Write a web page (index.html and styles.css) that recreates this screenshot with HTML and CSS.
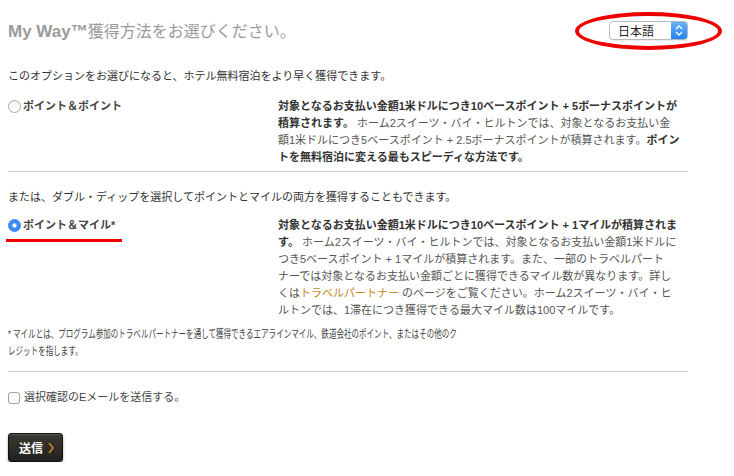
FILE: index.html
```html
<!DOCTYPE html>
<html lang="ja">
<head>
    <meta charset="UTF-8">
    <title>My Way 獲得方法</title>
    <link rel="stylesheet" href="styles.css">
</head>
<body>
    <div class="page">
        <div class="header">
            <h1 class="title"><span class="brand">My Way™</span><span class="title-ja">獲得方法をお選びください。</span></h1>
            <div class="lang-select">
                <span class="lang-value">日本語</span>
                <span class="lang-arrows">
                    <svg width="16" height="19" viewBox="0 0 16 19">
                        <path d="M5 8 L8 5 L11 8" fill="none" stroke="#fff" stroke-width="1.4"/>
                        <path d="M5 11 L8 14 L11 11" fill="none" stroke="#fff" stroke-width="1.4"/>
                    </svg>
                </span>
            </div>
        </div>
        <div class="highlight-ring"></div>

        <p class="intro">このオプションをお選びになると、ホテル無料宿泊をより早く獲得できます。</p>
        <div class="option">
            <div class="option-left">
                <label class="option-label"><span class="radio"></span>ポイント＆ポイント</label>
            </div>
            <p class="option-desc"><b>対象となるお支払い金額1米ドルにつき10ベースポイント + 5ボーナスポイントが積算されます。</b> ホーム2スイーツ・バイ・ヒルトンでは、対象となるお支払い金額1米ドルにつき5ベースポイント + 2.5ボーナスポイントが積算されます。<b>ポイントを無料宿泊に変える最もスピーディな方法です。</b></p>
        </div>

        <hr class="divider">

        <p class="intro intro-second">または、ダブル・ディップを選択してポイントとマイルの両方を獲得することもできます。</p>
        <div class="option option-second">
            <div class="option-left">
                <label class="option-label"><span class="radio radio-on"></span>ポイント＆マイル*</label>
                <div class="mark-line"></div>
            </div>
            <p class="option-desc"><b>対象となるお支払い金額1米ドルにつき10ベースポイント + 1マイルが積算されます。</b> ホーム2スイーツ・バイ・ヒルトンでは、対象となるお支払い金額1米ドルにつき5ベースポイント + 1マイルが積算されます。また、一部のトラベルパートナーでは対象となるお支払い金額ごとに獲得できるマイル数が異なります。詳しくは<a href="#" class="partner-link">トラベルパートナー</a> のページをご覧ください。ホーム2スイーツ・バイ・ヒルトンでは、1滞在につき獲得できる最大マイル数は100マイルです。</p>
        </div>

        <p class="footnote">* マイルとは、プログラム参加のトラベルパートナーを通して獲得できるエアラインマイル、鉄道会社のポイント、またはその他のクレジットを指します。</p>

        <hr class="divider divider-low">

        <label class="confirm"><span class="checkbox"></span>選択確認のEメールを送信する。</label>

        <button type="button" class="submit-btn">送信
            <svg class="chevron" width="6" height="12" viewBox="0 0 6 12">
                <path d="M1 1 L5 6 L1 11" fill="none" stroke="#d8961c" stroke-width="1.3"/>
            </svg>
        </button>
    </div>
</body>
</html>
```

FILE: styles.css
```css
* {
    box-sizing: border-box;
}
body {
    margin: 0;
    font-family: "Liberation Sans", "Noto Sans CJK JP", sans-serif;
    font-size: 11px;
    line-height: 17px;
    color: #444;
}
.page {
    width: 696px;
    padding: 0 8px;
}
.header {
    display: flex;
    justify-content: space-between;
    align-items: center;
    height: 44px;
    padding-top: 20px;
}
.title {
    margin: 0;
    font-size: 17px;
    line-height: 24px;
    font-weight: normal;
    color: #9a9a9a;
}
.brand {
    font-weight: bold;
}
.title-ja {
    font-size: 16px;
}
.lang-select {
    display: flex;
    align-items: center;
    width: 79px;
    height: 19px;
    margin-top: -3px;
    border: 1px solid #b8b8b8;
    border-radius: 4px;
    background: #fff;
    overflow: hidden;
    box-shadow: 0 1px 1px rgba(0,0,0,0.08);
}
.lang-value {
    flex: 1;
    padding-left: 8px;
    font-family: "Noto Sans CJK JP", sans-serif;
    font-size: 12px;
    line-height: 17px;
    color: #222;
}
.lang-arrows {
    display: flex;
    width: 16px;
    height: 19px;
    margin-top: -1px;
    background: linear-gradient(#6fb4fb, #1c7ff5);
}
.highlight-ring {
    position: absolute;
    left: 575px;
    top: 12px;
    width: 147px;
    height: 38px;
    border: 4px solid #ee0000;
    border-radius: 50%;
}
.intro {
    margin: 24px 0 0 0;
    color: #333;
}
.intro-second {
    margin-top: 17px;
}
.option {
    display: flex;
    margin-top: 13px;
}
.option-second {
    margin-top: 11px;
}
.option-left {
    width: 270px;
    flex-shrink: 0;
}
.option-label {
    display: flex;
    align-items: center;
    font-weight: bold;
    color: #444;
}
.radio {
    width: 13px;
    height: 13px;
    margin-right: 2px;
    border: 1px solid #a8a8a8;
    border-radius: 50%;
    background: linear-gradient(#f4f4f4, #fff);
}
.radio-on {
    border: 1px solid #3a87f0;
    background: radial-gradient(circle, #fff 0 1.8px, #3b8ef5 2.4px);
}
.mark-line {
    width: 116px;
    height: 3px;
    margin: 5px 0 0 -2px;
    background: #ee0000;
}
.option-desc {
    width: 402px;
    margin: 0;
    color: #555;
    line-break: strict;
}
.option-desc b {
    color: #333;
}
.partner-link {
    color: #c1871a;
    text-decoration: none;
}
.footnote {
    width: 664px;
    margin: 7px 0 0 0;
    color: #444;
    transform: scaleX(0.685);
    transform-origin: left top;
}
.divider {
    width: 680px;
    height: 1px;
    margin: 5px 0 0 0;
    border: 0;
    background: #cccccc;
}
.divider-low {
    margin-top: 11px;
}
.confirm {
    display: flex;
    align-items: center;
    margin-top: 17px;
    color: #444;
}
.checkbox {
    width: 12px;
    height: 12px;
    margin-right: 4px;
    border: 1px solid #a0a0a0;
    border-radius: 3px;
    background: #fff;
}
.submit-btn {
    display: flex;
    align-items: center;
    justify-content: center;
    gap: 5px;
    width: 55px;
    height: 29px;
    margin-top: 27px;
    padding: 0 0 0 2px;
    border: 1px solid #111;
    border-radius: 3px;
    background: linear-gradient(#3a3833, #23211d);
    box-shadow: inset 0 1px 0 rgba(255,255,255,0.15), 0 2px 3px rgba(0,0,0,0.35);
    font-family: "Noto Sans CJK JP", sans-serif;
    font-size: 12px;
    font-weight: bold;
    color: #fff;
}
```
